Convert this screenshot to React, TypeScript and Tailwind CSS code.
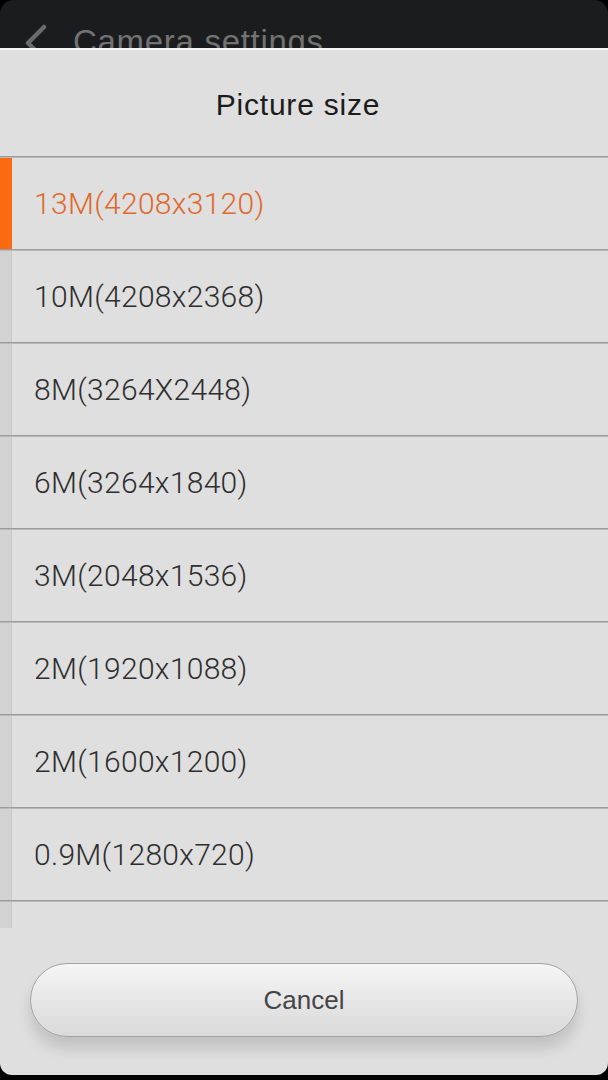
import React from "react";

const sizes = [
  "13M(4208x3120)",
  "10M(4208x2368)",
  "8M(3264X2448)",
  "6M(3264x1840)",
  "3M(2048x1536)",
  "2M(1920x1088)",
  "2M(1600x1200)",
  "0.9M(1280x720)",
];

function Line() {
  return (
    <div className="h-[2px] w-full flex flex-col">
      <div className="h-[1px] bg-[#9c9c9c]" />
      <div className="h-[1px] bg-[#b8b8b8]" />
    </div>
  );
}

export default function App() {
  return (
    <div className="h-[1080px] w-[608px] bg-black overflow-hidden font-['Liberation_Sans',sans-serif]">
      <div className="h-[48px] bg-[#1b1c1e] rounded-t-[14px] flex items-start relative">
        <svg
          className="absolute left-[22px] top-[24px]"
          width="26"
          height="40"
          viewBox="0 0 26 40"
        >
          <polyline
            points="22,3 6,19 22,35"
            fill="none"
            stroke="#6b6b6b"
            strokeWidth="4.5"
            strokeLinecap="round"
            strokeLinejoin="round"
          />
        </svg>
        <div className="pl-[73px] pt-[25px] text-[33px] leading-[33px] tracking-[0.7px] text-[#727272] whitespace-nowrap">
          Camera settings
        </div>
      </div>

      <div className="relative z-10 h-[1027px] bg-[#dfdfdf] rounded-b-[12px] flex flex-col border-t-2 border-[#f4f4f4]">
        <div className="h-[106px] flex items-center justify-center pr-[12px] pt-[3px]">
          <span className="text-[30px] tracking-[0.8px] text-[#1c1c1c]">Picture size</span>
        </div>

        <div className="h-[772px] overflow-hidden flex flex-col">
          <Line />
          {sizes.map((s, i) => (
            <React.Fragment key={s}>
              <div className="h-[91px] flex items-stretch">
                <div
                  className={
                    i === 0
                      ? "w-[12px] bg-[#fb6a10]"
                      : "w-[12px] bg-[#d2d2d2] border-r border-[#c8c8c8]"
                  }
                />
                <div
                  className={
                    i === 0
                      ? "flex items-center pl-[22px] text-[30px] font-['Roboto',sans-serif] font-light tracking-[0.3px] text-[#e0692c]"
                      : "flex items-center pl-[22px] text-[30px] font-['Roboto',sans-serif] font-light tracking-[0.3px] text-[#2e2e2e]"
                  }
                >
                  {s}
                </div>
              </div>
              <Line />
            </React.Fragment>
          ))}
          <div className="flex-1 flex">
            <div className="w-[12px] bg-[#d2d2d2] border-r border-[#c8c8c8]" />
          </div>
        </div>

        <div className="flex-1 flex flex-col px-[30px] pt-[35px]">
          <div className="h-[74px] rounded-full border border-[#a3a3a3] bg-gradient-to-b from-[#f5f5f5] to-[#d9d9d9] shadow-[0_12px_14px_rgba(0,0,0,0.13)] flex items-center justify-center">
            <span className="text-[26px] text-[#454545]">Cancel</span>
          </div>
        </div>
      </div>
    </div>
  );
}
